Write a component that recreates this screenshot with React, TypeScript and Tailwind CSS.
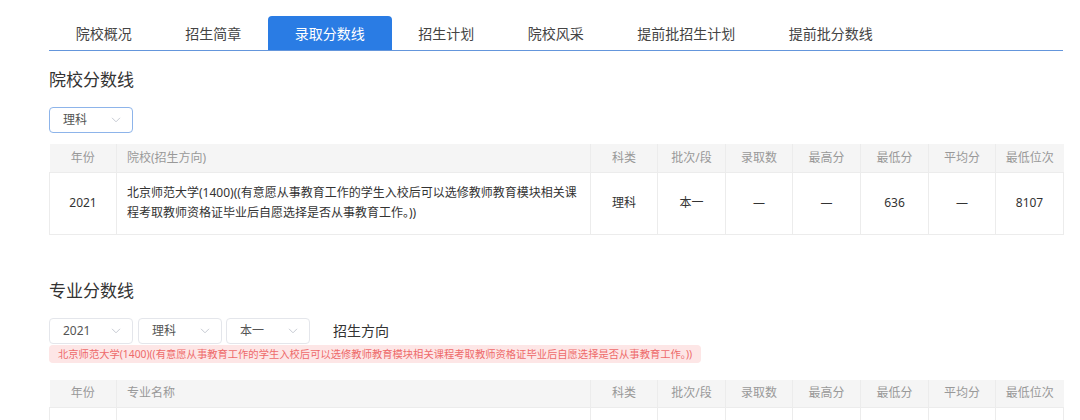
import React from "react";

const FONT = { fontFamily: '"Noto Sans", "Noto Sans CJK SC", sans-serif' };

const tabs = ["院校概况", "招生简章", "录取分数线", "招生计划", "院校风采", "提前批招生计划", "提前批分数线"];

const cols = [67, 474, 67, 68, 67, 68, 68, 67, 68];

function Chevron() {
  return (
    <svg width="10" height="6" viewBox="0 0 10 6" className="shrink-0">
      <path d="M1 0.8l4 4 4-4" fill="none" stroke="#c6cad2" strokeWidth="1" />
    </svg>
  );
}

function Select({ label, active }: { label: string; active?: boolean }) {
  return (
    <div
      className={`w-[84px] h-[26px] rounded-[4px] border flex items-center justify-between pl-[13px] pr-[11px] text-[12px] text-[#555] bg-white ${
        active ? "border-[#8db4ea]" : "border-[#e4e6eb]"
      }`}
    >
      <span>{label}</span>
      <Chevron />
    </div>
  );
}

function TableBlock({ second }: { second: string }) {
  const head = ["年份", second, "科类", "批次/段", "录取数", "最高分", "最低分", "平均分", "最低位次"];
  return (
    <table className="table-fixed border-collapse w-[1014px]">
      <colgroup>
        {cols.map((w, i) => (
          <col key={i} style={{ width: w }} />
        ))}
      </colgroup>
      <thead>
        <tr className="h-[28px] bg-[#f5f5f5]">
          {head.map((h, i) => (
            <th
              key={i}
              className={`font-normal text-[12px] text-[#999] border-r border-[#ececec] last:border-r-0 p-0 ${
                i === 1 ? "text-left pl-[10px]" : "text-center"
              }`}
            >
              {h}
            </th>
          ))}
        </tr>
      </thead>
      {second === "院校(招生方向)" ? (
        <tbody>
          <tr className="h-[62px]">
            <td className="border border-[#ececec] text-center text-[12px] text-[#333]">2021</td>
            <td className="border border-[#ececec] text-left text-[12px] text-[#333] leading-[20px] pl-[10px] pr-[4px]">
              北京师范大学(1400)((有意愿从事教育工作的学生入校后可以选修教师教育模块相关课
              <br />
              程考取教师资格证毕业后自愿选择是否从事教育工作。))
            </td>
            {["理科", "本一", "—", "—", "636", "—", "8107"].map((v, i) => (
              <td key={i} className="border border-[#ececec] text-center text-[12px] text-[#333]">
                {v}
              </td>
            ))}
          </tr>
        </tbody>
      ) : (
        <tbody>
          <tr className="h-[62px]">
            {cols.map((_, i) => (
              <td key={i} className="border border-[#ececec]"></td>
            ))}
          </tr>
        </tbody>
      )}
    </table>
  );
}

export default function App() {
  return (
    <div className="w-[1080px] h-[420px] overflow-hidden bg-white" style={FONT}>
      <div className="ml-[49px] w-[1014px] pt-[16px]">
        <div className="flex h-[35px] border-b border-[#6496dc]">
          {tabs.map((t, i) => (
            <div
              key={t}
              className={`h-[34px] px-[26.75px] flex items-center text-[14px] whitespace-nowrap ${
                i === 2 ? "bg-[#2a7ce4] text-white rounded-t-[4px]" : "text-[#444]"
              }`}
            >
              {t}
            </div>
          ))}
        </div>

        <div className="mt-[17px] h-[24px] leading-[24px] text-[17px] text-[#333]">院校分数线</div>
        <div className="mt-[15px] flex">
          <Select label="理科" active />
        </div>
        <div className="mt-[11px]">
          <TableBlock second="院校(招生方向)" />
        </div>

        <div className="mt-[44px] h-[24px] leading-[24px] text-[17px] text-[#333]">专业分数线</div>
        <div className="mt-[15px] flex items-center h-[26px]">
          <Select label="2021" />
          <div className="ml-[5px]">
            <Select label="理科" />
          </div>
          <div className="ml-[4px]">
            <Select label="本一" />
          </div>
          <div className="ml-[23px] text-[14px] text-[#333]">招生方向</div>
        </div>
        <div className="mt-[1px] flex">
          <div className="h-[18px] leading-[18px] rounded-[4px] bg-[#fde6e6] text-[#ee6a6a] text-[10.3px] px-[9px] whitespace-nowrap">
            北京师范大学(1400)((有意愿从事教育工作的学生入校后可以选修教师教育模块相关课程考取教师资格证毕业后自愿选择是否从事教育工作。))
          </div>
        </div>
        <div className="mt-[17px]">
          <TableBlock second="专业名称" />
        </div>
      </div>
    </div>
  );
}
